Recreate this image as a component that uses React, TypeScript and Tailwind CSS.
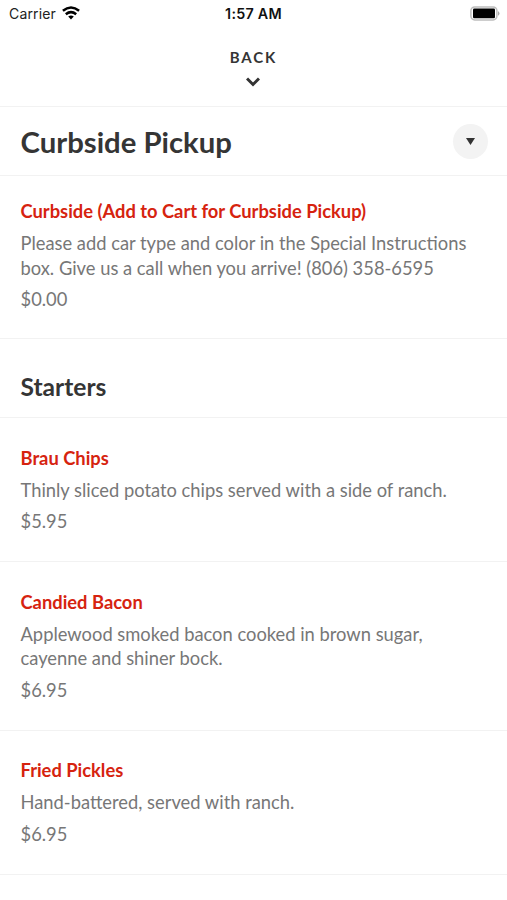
import React from 'react';

type Item = { name: string; lines: string[]; price: string };

const starters: Item[] = [
  { name: 'Brau Chips', lines: ['Thinly sliced potato chips served with a side of ranch.'], price: '$5.95' },
  { name: 'Candied Bacon', lines: ['Applewood smoked bacon cooked in brown sugar,', 'cayenne and shiner bock.'], price: '$6.95' },
  { name: 'Fried Pickles', lines: ['Hand-battered, served with ranch.'], price: '$6.95' },
];

function MenuItem({ item, first = false }: { item: Item; first?: boolean }) {
  return (
    <article className={`border-b border-[#f2f2f2] px-[20.5px] ${first ? 'pt-[23px] pb-[26px]' : 'pt-[27.75px] pb-[26.75px]'}`}>
      <h3 className="text-[18.34px] leading-6 font-bold text-[#d6230f]">{item.name}</h3>
      <p className="mt-2 text-[18.34px] leading-[24.5px] text-[#777]">
        {item.lines.map((line) => (
          <span key={line} className="block whitespace-nowrap">{line}</span>
        ))}
      </p>
      <p className="mt-[7px] text-[18.34px] leading-[25px] text-[#777]">{item.price}</p>
    </article>
  );
}

export default function App() {
  return (
    <main className="h-[900px] w-[507px] overflow-hidden bg-white font-['Lato',sans-serif] text-[#353535]">
      <div className="grid h-[27px] grid-cols-3 items-center pl-[9px] pr-[7px] font-['Inter',sans-serif] text-[14px] text-[#222]">
        <div className="flex items-center gap-1.5">
          <span className="tracking-[0.15px]">Carrier</span>
          <svg className="mb-px" width="18" height="14" viewBox="0 0 18 14" fill="none" stroke="#000" strokeWidth="2.5">
            <path d="M.9 4.8Q9-1.8 17.1 4.8M3.8 8.2q5.2-4.2 10.4 0" />
            <path d="M6.2 10.6q2.8-2 5.6 0L9 13.4z" fill="#000" stroke="none" />
          </svg>
        </div>
        <span className="pr-0.5 text-center text-[14.3px] font-semibold tracking-[0.25px] whitespace-nowrap text-[#111]">1:57 AM</span>
        <svg className="justify-self-end" width="30" height="15" viewBox="0 0 30 15">
          <rect x=".9" y=".9" width="26" height="13" rx="3.8" fill="#fff" stroke="#bdbdbd" strokeWidth="1.5" />
          <rect x="3" y="2.6" width="22" height="9.6" rx="1.3" fill="#000" />
          <path d="M28 5q3 2.4 0 4.8z" fill="#aaa" />
        </svg>
      </div>
      <header className="flex h-20 flex-col items-center border-b border-[#f2f2f2] pt-[21px]">
        <span className="text-[15px] leading-[19px] font-bold tracking-[1.9px]">BACK</span>
        <svg className="mt-[9.5px] mr-[1px]" width="14" height="10" viewBox="0 0 14 10" fill="none" stroke="#333" strokeWidth="3"><path d="m1 1.5 6 6 6-6" /></svg>
      </header>
      <div className="flex h-[69px] items-center justify-between border-b border-[#f2f2f2] pl-[20.5px] pr-[19px]">
        <h1 className="pt-px text-[29.3px] leading-9 font-bold">Curbside Pickup</h1>
        <button className="flex size-[35px] items-center justify-center rounded-full bg-[#f3f3f3]" aria-label="Choose category">
          <svg width="9" height="7" viewBox="0 0 9 7"><path d="M0 0h9L4.5 7z" fill="#333" /></svg>
        </button>
      </div>
      <MenuItem first item={{ name: 'Curbside (Add to Cart for Curbside Pickup)', lines: ['Please add car type and color in the Special Instructions', 'box. Give us a call when you arrive! (806) 358-6595'], price: '$0.00' }} />
      <h2 className="h-[79px] border-b border-[#f2f2f2] px-[20.5px] pt-[31.5px] text-[24.6px] leading-8 font-bold">Starters</h2>
      {starters.map((item) => <MenuItem key={item.name} item={item} />)}
    </main>
  );
}
